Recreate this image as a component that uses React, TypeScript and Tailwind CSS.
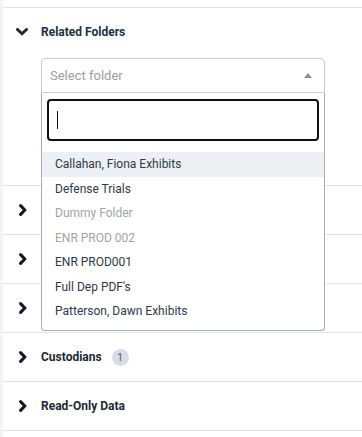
import React from 'react';

const font = { fontFamily: 'Roboto, "Liberation Sans", sans-serif' };

const ChevronDown = () => (
  <svg viewBox="0 0 12 8" className="w-[12px] h-[8px]">
    <path d="M1.5 1.5 L6 5.8 L10.5 1.5" fill="none" stroke="#1f2a37" strokeWidth="3" strokeLinecap="round" strokeLinejoin="miter" />
  </svg>
);

const ChevronRight = () => (
  <svg viewBox="0 0 8 12" className="w-[8px] h-[12px]">
    <path d="M1.6 1.6 L5.8 6 L1.6 10.4" fill="none" stroke="#111827" strokeWidth="3" strokeLinecap="round" strokeLinejoin="miter" />
  </svg>
);

const options = [
  { label: 'Callahan, Fiona Exhibits', active: true },
  { label: 'Defense Trials' },
  { label: 'Dummy Folder', disabled: true },
  { label: 'ENR PROD 002', disabled: true },
  { label: 'ENR PROD001' },
  { label: "Full Dep PDF's" },
  { label: 'Patterson, Dawn Exhibits' },
];

const Row = ({ label, badge }: { label?: string; badge?: string }) => (
  <div className="h-[49px] border-t border-[#dfe3e8] flex items-center pl-[16px]">
    <ChevronRight />
    {label && <span className="ml-[14px] text-[12px] font-bold text-[#1c2733]">{label}</span>}
    {badge && (
      <span className="ml-[10px] w-[17px] h-[17px] rounded-full bg-[#d7dde4] text-[10px] text-[#4b5563] flex items-center justify-center">
        {badge}
      </span>
    )}
  </div>
);

export default function App() {
  return (
    <div className="flex min-h-screen bg-white" style={font}>
      <div className="w-[3px] bg-[#f3f4f5]" />
      <div className="flex-1 pt-[7px]">
        {/* Related Folders */}
        <div className="border-t border-[#dfe3e8]">
          <div className="h-[48px] flex items-center pl-[13px]">
            <ChevronDown />
            <span className="ml-[13px] text-[12px] font-bold text-[#232f3e]">Related Folders</span>
          </div>
          <div className="pl-[38px] pr-[37px] pt-[2px] pb-[92px]">
            <div className="relative">
              <div className="h-[35px] border border-[#c9cdd2] rounded-t-[4px] flex items-center justify-between pl-[8px] pr-[12px]">
                <span className="text-[13px] text-[#9aa0a6]">Select folder</span>
                <svg viewBox="0 0 8 5" className="w-[8px] h-[5px]">
                  <path d="M0 5 L4 0 L8 5 Z" fill="#8a8f95" />
                </svg>
              </div>
              <div className="absolute left-0 right-0 top-full z-10 bg-white border border-t-0 border-[#a9adb2] rounded-b-[4px] pt-[6px] pb-[6px]">
                <div className="mx-[5px] h-[42px] border-2 border-[#111] rounded-[4px] flex items-center pl-[8px]">
                  <span className="w-[1px] h-[18px] bg-[#111]" />
                </div>
                <div className="mt-[11px]">
                  {options.map((o) => (
                    <div
                      key={o.label}
                      className={`h-[24.5px] flex items-center pl-[13px] text-[12px] ${o.active ? 'bg-[#ecf0f4]' : ''} ${o.disabled ? 'text-[#a0a4a8]' : 'text-[#2e3a48]'}`}
                    >
                      {o.label}
                    </div>
                  ))}
                </div>
              </div>
            </div>
          </div>
        </div>
        <Row />
        <Row />
        <Row />
        <Row label="Custodians" badge="1" />
        <Row label="Read-Only Data" />
        <div className="border-t border-[#dfe3e8]" />
      </div>
    </div>
  );
}
